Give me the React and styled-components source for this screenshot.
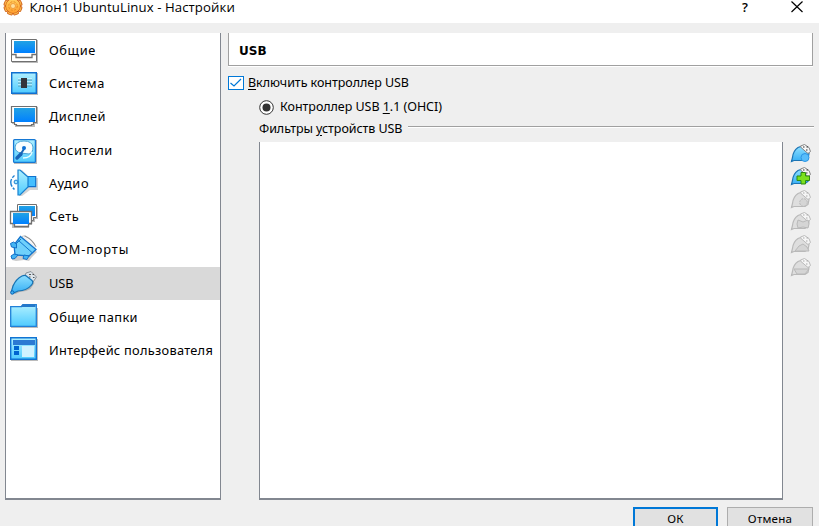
import React from "react";
import styled, { createGlobalStyle } from "styled-components";

const Global = createGlobalStyle`
  * { box-sizing: border-box; }
  body { margin: 0; background: #efefef; overflow: hidden; }
`;

const Window = styled.div`
  width: 819px;
  height: 526px;
  overflow: hidden;
  display: flex;
  flex-direction: column;
  background: #efefef;
  color: #000;
  font: 12.5px/16px "Noto Sans", "Open Sans", sans-serif;
`;

const TitleBar = styled.header`
  height: 23px;
  flex: none;
  display: flex;
  background: #fff;
`;

const TitleIcon = styled.div`
  width: 29.5px;
  height: 20px;
  svg { display: block; }
`;

const Title = styled.h1`
  margin: 0;
  flex: 1;
  font: 400 13.2px/14px "Open Sans", "Noto Sans", sans-serif;
  letter-spacing: ${(p) => p.$track}px;
  white-space: nowrap;
`;

const TitleButtons = styled.div`
  display: flex;
  flex: none;
  margin-right: -4px;
`;

const TitleButton = styled.button`
  width: 52px;
  height: 14px;
  padding: 0;
  border: 0;
  background: none;
  color: #000;
  display: flex;
  justify-content: center;
  font: 600 13px/14px "Open Sans", sans-serif;
`;

const Body = styled.div`
  display: flex;
  flex: none;
  height: 467px;
  margin-top: 10px;
  padding: 0 6px 0 5px;
  gap: 7px;
`;

const Sidebar = styled.nav`
  width: 216px;
  flex: none;
  background: #fff;
  border: solid #828790;
  border-width: 0 1px 2px;
  padding-top: 1px;
`;

const NavItem = styled.div`
  height: 33.3px;
  display: flex;
  align-items: center;
  padding: 0 0 2px 3px;
  background: ${(p) => (p.$active ? "#d9d9d9" : "transparent")};
  svg { flex: none; display: block; }
  &:nth-child(n + 9) > span { margin-top: 2px; }
`;

const Label = styled.span`
  letter-spacing: ${(p) => p.$track || 0}px;
  white-space: nowrap;
  u { text-underline-offset: 2px; }
`;

const NavLabel = styled(Label)`
  margin-left: 10px;
  font-size: 12.8px;
`;

const Content = styled.main`
  flex: 1;
  display: flex;
  flex-direction: column;
`;

const PageHeader = styled.h2`
  margin: 0;
  height: 33px;
  background: #fff;
  border: solid #a0a0a0;
  border-width: 0 1px 1px;
  box-shadow: 0 1px #fff;
  padding: 10px 10px 6px;
  font: 700 12px/16px "DejaVu Sans", sans-serif;
`;

const CheckRow = styled.label`
  display: flex;
  height: 16px;
  margin-top: 9px;
  gap: 4px;
  align-items: center;
`;

const CheckBox = styled.span`
  width: 16px;
  height: 14px;
  border: 1px solid #0078d7;
  background: #fff;
  svg { display: block; }
`;

const RadioRow = styled(CheckRow)`
  margin: 8px 0 0 31px;
  gap: 6px;
`;

const GroupTitle = styled.div`
  display: flex;
  height: 16px;
  margin: 6px 0 0 31px;
  gap: 6px;
`;

const Rule = styled.span`
  flex: 1;
  height: 2px;
  margin-top: 5px;
  margin-right: -1px;
  border-top: 1px solid #a0a0a0;
  border-bottom: 1px solid #fff;
`;

const FilterArea = styled.div`
  flex: 1;
  display: flex;
  margin: 5px 0 0 31px;
`;

const FilterList = styled.div`
  width: 524px;
  background: #fff;
  border: solid #828790;
  border-width: 0 1px 2px;
`;

const Tools = styled.div`
  margin: 0 0 0 7px;
  display: flex;
  flex-direction: column;
  gap: 0.8px;
  svg { display: block; }
`;

const Footer = styled.footer`
  display: flex;
  flex: none;
  justify-content: flex-end;
  margin-top: 7px;
  padding-right: 6px;
  gap: 9px;
`;

const DialogButton = styled.button`
  width: ${(p) => (p.$primary ? 85 : 86)}px;
  height: ${(p) => (p.$primary ? 20 : 21)}px;
  padding: 0;
  background: #e1e1e1;
  border: solid ${(p) => (p.$primary ? "#0078d7" : "#adadad")};
  border-width: ${(p) => (p.$primary ? 2 : 1)}px;
  border-bottom: 0;
  font: 11.6px/15px "Noto Sans", sans-serif;
  letter-spacing: 0.2px;
  color: #000;
`;

const HiddenSvg = styled.svg`
  position: absolute;
`;

const Defs = () => (
  <HiddenSvg width="0" height="0">
    <defs>
      <linearGradient id="screen" x2="0" y2="1"><stop stopColor="#22a2e4" /><stop offset="1" stopColor="#0080ff" /></linearGradient>
      <linearGradient id="cyan" x2="0" y2="1"><stop stopColor="#b0f0ff" /><stop offset="1" stopColor="#4fcbff" /></linearGradient>
      <linearGradient id="plug" x2="0" y2="1"><stop stopColor="#8fe0ff" /><stop offset="1" stopColor="#35aef5" /></linearGradient>
      <linearGradient id="gear" x2="0" y2="1"><stop stopColor="#ffd060" /><stop offset="1" stopColor="#ff9f2e" /></linearGradient>
    </defs>
  </HiddenSvg>
);

const Icon = ({ children }) => (
  <svg width="30" height="28" viewBox="0 0 30 28">{children}</svg>
);

const icons = {
  general: (
    <>
      <path d="M3 4h26v23H3z" fill="#bbb" />
      <path d="M2.5 3.5h25v22h-25z" fill="#fff" stroke="#707070" />
      <path d="M5 5h21v12H5z" fill="url(#screen)" />
      <path d="M3 18.500h4v3h16v-3h4" fill="none" stroke="#707070" strokeWidth="1.300" />
    </>
  ),
  system: (
    <>
      <path d="M3 4h26v22H3z" fill="#bbb" />
      <path d="M2.700 3.700h24.600v20.600H2.700z" fill="url(#cyan)" stroke="#1070d0" strokeWidth="1.400" />
      <path d="M9 10h14M9 13h14M9 16h14" stroke="#eaffff" />
      <path d="M9 11h14M9 14h14M9 17h14" stroke="#4a9cba" />
      <path d="M12 9h6v10h-6z" fill="#34353b" />
    </>
  ),
  display: (
    <>
      <path d="M3 5h26v17h-3v3H6v-3H3z" fill="#bbb" />
      <path d="M2.500 4.500h25v16h-3v2h-2v1h-15v-1h-2v-2h-3z" fill="#fff" stroke="#707070" strokeWidth="1.200" />
      <path d="M5 6h21v14H5z" fill="url(#screen)" />
    </>
  ),
  storage: (
    <>
      <path d="M5 4h23v24H5z" fill="#bbb" />
      <rect x="4.600" y="3.600" width="21.800" height="22.800" rx="1" fill="url(#cyan)" stroke="#1678d4" strokeWidth="1.300" />
      <path d="M6 11q1-6 9-6t9 6q0 6-4 7l-8-1q-6-1-6-6z" fill="#f8feff" stroke="#4aa5d8" />
      <path d="M8 22l4-4" stroke="#1765b8" strokeWidth="3.500" strokeLinecap="round" />
      <path d="M11 19l4-6" stroke="#1765b8" strokeWidth="2" />
      <circle cx="15" cy="12" r="2" fill="#0b6fd4" />
      <path d="M14 22q8 0 9-6" stroke="#eaffff" fill="none" strokeWidth="1.300" />
    </>
  ),
  audio: (
    <>
      <path d="M9 1h3l8 8h8v12h-8l-8 6H9z" fill="#aaa" opacity=".5" transform="translate(1 0)" />
      <path d="M18.500 7.500h8.200v10.200h-8.200z" fill="#45bfff" stroke="#1072ce" strokeWidth="1.200" />
      <path d="M9 1h2l8 7v10l-8 8H9z" fill="url(#cyan)" stroke="#1780d0" strokeWidth="1.200" />
      <circle cx="7" cy="13" r="1.900" fill="#a5ebff" stroke="#1e80d2" />
      <path d="M5.500 6.500Q-2 13 5.500 20.500" fill="none" stroke="#1e80d2" strokeWidth="1.400" strokeDasharray="3 1.500 8 1.500" />
    </>
  ),
  network: (
    <>
      <path d="M9 4h20v13h-3v3H9zM3 11h20v12h-3v3H3z" fill="#bbb" />
      <path d="M8.500 2.500h19v13h-3v3h-16z" fill="#fff" stroke="#707070" />
      <path d="M10 4h16v10H10z" fill="url(#screen)" />
      <path d="M1.500 9.500h21v12h-3v3h-14v-3h-4z" fill="#fff" stroke="#707070" strokeWidth="1.300" />
      <path d="M4 11h16v11H4z" fill="url(#screen)" />
    </>
  ),
  serial: (
    <>
      <path d="M13 1.500l3-.5q8 4 11 11" fill="none" stroke="#909090" strokeWidth="1.200" />
      <path d="M12 2l3-1 12 11-1 3z" fill="#f0f0f0" />
      <path d="M11 2l16 14-5 5-3 4-5-1-8 1-4-1 4-4z" fill="#999" opacity=".5" transform="translate(1 1)" />
      <path d="M11.500 1.500L27 14.500l-7 6.500-14-1-1-10z" fill="#6fd0fb" stroke="#1374cc" strokeWidth="1.300" />
      <path d="M9.500 5.500L23 17.500M6 10l6-6" fill="none" stroke="#1277cd" />
      <path d="M1.500 8.500l3-1.500 3 2v4l-5-1zM2 21l3-2 4 1-3 3.500-3 .5zM15 20l5 1-2 3.500-4-1z" fill="#43b5f4" stroke="#1371c9" />
    </>
  ),
  usb: (
    <>
      <path d="M17 4l5-1.500L27.500 8 24 13l-8-6z" fill="#dce4ea" stroke="#8c9298" />
      <path d="M20 5.500h2M23.500 5.500h1.500M20 8h1.500M24 8.500h1.500" stroke="#555" strokeWidth="1.200" />
      <path d="M14 6.500l3 0 7.500 6.500-4 6q-5 3-11 3l-4 2-3-1V15z" fill="#888" opacity=".5" transform="translate(1 1)" />
      <path d="M13 7q3-1.500 5 .5l5 4q2 2-1 5-4 5-13 5.500L4.500 24l-2-2L4 17Q7 10 13 7z" fill="url(#plug)" stroke="#1773b4" strokeWidth="1.200" />
      <circle cx="3.300" cy="23.500" r="1.700" fill="#40aef0" stroke="#0763b5" />
    </>
  ),
  folders: (
    <>
      <path d="M2 6h27v20H2z" fill="#bbb" />
      <path d="M1.700 4.700h11l2-2h12.600v21.600H1.700z" fill="url(#cyan)" stroke="#2080d8" strokeWidth="1.300" />
      <path d="M11 5l2.500-3h13V5z" fill="#2478ca" />
    </>
  ),
  ui: (
    <>
      <path d="M2 4h27v22H2z" fill="#bbb" />
      <path d="M1.700 2.700h25.600v21.600H1.700z" fill="url(#cyan)" stroke="#1074d3" strokeWidth="1.400" />
      <path d="M4 5h22v5H4z" fill="#2c7ad3" />
      <path d="M5 11h5v4H5zM5 16h5v4H5z" fill="#0065d0" />
      <path d="M13 11h12v11H13z" fill="#d0f2ff" />
    </>
  ),
};

const entries = [
  ["general", "Общие", 0.6],
  ["system", "Система", 0.5],
  ["display", "Дисплей", 0.45],
  ["storage", "Носители", 0.5],
  ["audio", "Аудио", 0.6],
  ["network", "Сеть", 0.6],
  ["serial", "COM-порты", 0.9],
  ["usb", "USB", -0.1],
  ["folders", "Общие папки", 0.4],
  ["ui", "Интерфейс пользователя", 0.28],
];

const badges = {
  circle: (c, s) => <circle cx="15" cy="15.500" r="4" fill={c} stroke={s} />,
  add: () => <path d="M11 7.500h4.500v3.500h4v4.500h-4V19H11v-3.500H7V11h4z" fill="#7be01e" stroke="#2e8a10" />,
  edit: (c, s) => <circle cx="13.500" cy="14.500" r="3.800" fill={c} stroke={s} strokeDasharray="2 1" />,
  remove: (c, s) => <path d="M8 10l5 2 5-2 1 4-1 4-5-1-5 1-1-4z" fill={c} stroke={s} />,
  up: (c, s) => <path d="M5 18l4-5 4-2 4 3 2 4z" fill={c} stroke={s} />,
  down: (c, s) => <path d="M4 13h15l-4 5H7z" fill={c} stroke={s} />,
};

const FilterIcon = ({ kind, on }) => {
  const stroke = on ? "#1c74b4" : "#b9b9b9";
  return (
    <svg width="22" height="22" viewBox="0 0 22 22">
      <path d="M1.500 19.500l1-4Q3 9 8 5.500l3-1 8 7-1 5-3 2H4z" fill={on ? "url(#plug)" : "#dedede"} stroke={stroke} strokeWidth="1.200" />
      <path d="M10.500 4l4-1.500 4.500 3 1.500 4-2.500 2-7-6z" fill="#f6f6f6" stroke={on ? "#858585" : "#bbb"} />
      <path d="M13 5h1.500M16.500 5H18M16 8h1.500" stroke={on ? "#333" : "#aaa"} />
      {badges[kind](on ? "#58bdfa" : "#d5d5d5", on ? "#2c95e4" : stroke)}
    </svg>
  );
};

const teeth = [0, 45, 90, 135, 180, 225, 270, 315];

const Gear = () => (
  <svg width="26" height="16" viewBox="0 0 26 16">
    <g fill="url(#gear)" stroke="#d4661a" strokeWidth="1">
      {teeth.map((a) => (
        <rect key={a} x="10.500" y="-3" width="5" height="5" rx="1" transform={`rotate(${a + 22.5} 13 6)`} />
      ))}
      <circle cx="13" cy="6" r="7.200" />
    </g>
    <circle cx="13" cy="6" r="6.800" fill="url(#gear)" />
    <circle cx="13" cy="6" r="4.300" fill="none" stroke="#ec8a24" strokeDasharray="2 1.400" />
    <circle cx="13" cy="6" r="2.500" fill="#ffdf9a" stroke="#e8892a" strokeWidth=".7" />
  </svg>
);

export default function App() {
  return (
    <Window>
      <Global />
      <Defs />
      <TitleBar>
        <TitleIcon><Gear /></TitleIcon>
        <Title $track={0.08}>Клон1 UbuntuLinux - Настройки</Title>
        <TitleButtons>
          <TitleButton aria-label="Справка">?</TitleButton>
          <TitleButton aria-label="Закрыть">
            <svg width="12" height="13" viewBox="0 0 12 13"><path d="M.5 1.500l11 10.500M11.500 1.500L.5 12" stroke="#000" strokeWidth="1.200" /></svg>
          </TitleButton>
        </TitleButtons>
      </TitleBar>
      <Body>
        <Sidebar>
          {entries.map(([id, name, track]) => (
            <NavItem key={id} $active={id === "usb"}>
              <Icon>{icons[id]}</Icon>
              <NavLabel $track={track}>{name}</NavLabel>
            </NavItem>
          ))}
        </Sidebar>
        <Content>
          <PageHeader>USB</PageHeader>
          <CheckRow>
            <CheckBox>
              <svg width="14" height="12" viewBox="0 0 14 12"><path d="M1.500 6l3.500 3 7-7" fill="none" stroke="#0078d7" strokeWidth="1.200" /></svg>
            </CheckBox>
            <Label $track={-0.04}><u>В</u>ключить контроллер USB</Label>
          </CheckRow>
          <RadioRow>
            <svg width="15" height="15" viewBox="0 0 15 15"><circle cx="7.500" cy="7.500" r="6.800" fill="#fff" stroke="#333" /><circle cx="7.500" cy="7.500" r="4" fill="#333" /></svg>
            <Label $track={-0.04}>Контроллер USB <u>1</u>.1 (OHCI)</Label>
          </RadioRow>
          <GroupTitle>
            <Label $track={-0.06}>Фильтры <u>у</u>стройств USB</Label>
            <Rule />
          </GroupTitle>
          <FilterArea>
            <FilterList />
            <Tools>
              {Object.keys(badges).map((kind, i) => <FilterIcon key={kind} kind={kind} on={i < 2} />)}
            </Tools>
          </FilterArea>
        </Content>
      </Body>
      <Footer>
        <DialogButton $primary>ОК</DialogButton>
        <DialogButton>Отмена</DialogButton>
      </Footer>
    </Window>
  );
}
